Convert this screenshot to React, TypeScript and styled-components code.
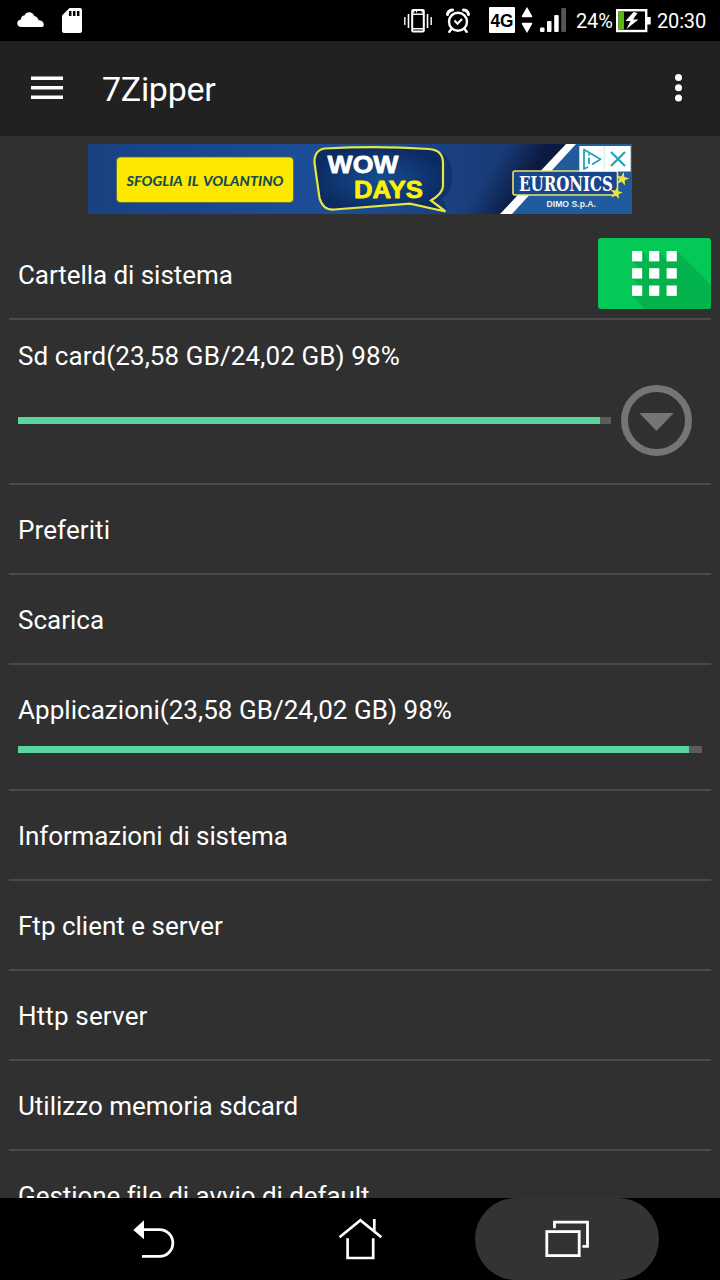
import React from "react";
import styled, { createGlobalStyle } from "styled-components";

const GlobalStyle = createGlobalStyle`
  * { box-sizing: border-box; }
  body { margin: 0; background: #000; }
  svg { display: block; flex: none; }
`;

const Screen = styled.div`
  width: 720px;
  height: 1280px;
  display: flex;
  flex-direction: column;
  overflow: hidden;
  background: #303030;
  color: #fff;
  font-family: Roboto, "Liberation Sans", sans-serif;
`;

const StatusBar = styled.header`
  flex: none;
  height: 41px;
  padding: 0 14px 0 16px;
  display: flex;
  justify-content: space-between;
  align-items: center;
  background: #000;
`;

const StatusGroup = styled.div<{ $gap?: number }>`
  display: flex;
  align-items: center;
  height: 41px;
  gap: ${(p) => p.$gap ?? 0}px;
`;

const StatusText = styled.span<{ $width: number; $ml?: number }>`
  width: ${(p) => p.$width}px;
  margin-left: ${(p) => p.$ml ?? 0}px;
  padding-top: 1px;
  font-size: 20px;
  letter-spacing: -0.15px;
  line-height: 41px;
  white-space: nowrap;
`;

const Toolbar = styled.div`
  flex: none;
  height: 95px;
  padding: 0 37px 0 31px;
  display: flex;
  align-items: center;
  background: #212121;
`;

const Title = styled.h1`
  flex: 1;
  margin: 1px 0 0 39px;
  font-size: 34px;
  font-weight: 400;
  letter-spacing: -0.3px;
  line-height: 39px;
`;

const Body = styled.main`
  flex: 1;
  min-height: 0;
  overflow: hidden;
`;

const AdSlot = styled.div`
  height: 94px;
  padding-top: 8px;
  display: flex;
  justify-content: center;
  align-items: flex-start;
`;

const List = styled.ul`
  margin: 0;
  padding: 0 9px;
  list-style: none;
`;

const Row = styled.li<{ $height?: number }>`
  height: ${(p) => p.$height ?? 90}px;
  padding-left: 9px;
  border-bottom: 2px solid #4a4a4a;
  display: flex;
  flex-direction: column;
`;

const RowLine = styled.div`
  display: flex;
  justify-content: space-between;
  align-items: center;
`;

const Label = styled.span<{ $height?: number; $lineHeight?: number; $spacing?: number }>`
  font-size: 26px;
  letter-spacing: ${(p) => p.$spacing ?? 0}px;
  line-height: ${(p) => p.$lineHeight ?? 90}px;
  height: ${(p) => p.$height ?? 90}px;
  white-space: nowrap;
`;

const Track = styled.div<{ $width: number }>`
  width: ${(p) => p.$width}px;
  height: 7px;
  background: #5c5c5c;
`;

const Fill = styled.div`
  height: 7px;
  background: #5ad69c;
`;

const StorageLine = styled.div`
  display: flex;
  align-items: center;
  gap: 10px;
`;

const AppStorage = styled.div`
  margin-top: -9px;
`;

const GridButton = styled.button`
  width: 113px;
  height: 71px;
  margin-top: -3px;
  padding: 0;
  border: 0;
  border-radius: 3px;
  overflow: hidden;
  background: #05c957;
`;

const ExpandButton = styled.button`
  padding: 0;
  border: 0;
  background: none;
`;

const NavBar = styled.nav`
  flex: none;
  height: 82px;
  padding-left: 61px;
  display: flex;
  gap: 23px;
  background: #000;
`;

const NavButton = styled.button<{ $pressed?: boolean }>`
  width: 184px;
  height: 82px;
  padding: 0;
  border: 0;
  border-radius: 41px;
  display: flex;
  align-items: center;
  justify-content: center;
  background: ${(p) => (p.$pressed ? "#333" : "transparent")};
`;

const CloudIcon = () => (
  <svg width="30" height="41" viewBox="0 0 30 41" fill="#fff">
    <path d="M5.500 27C.2 27 -.2 19.800 5 19.500C5 16.500 6.500 15.300 8.500 15.500C10 11.200 16.500 11 18.300 16C20.500 16.300 22.300 18 22.500 20.300C25.500 20 28 22.500 27.800 25C27.600 26.300 27 27 26 27Z" />
  </svg>
);

const SdIcon = () => (
  <svg width="20" height="41" viewBox="0 0 20 41">
    <path d="M7.500 8H18Q20 8 20 10V31Q20 33 18 33H2Q0 33 0 31V15.500Z" fill="#fff" />
    <path d="M8.200 11v5M12.200 11v5M16.200 11v5" stroke="#000" strokeWidth="2.500" />
  </svg>
);

const VibrateIcon = () => (
  <svg width="28" height="41" viewBox="0 0 28 41" fill="none" stroke="#fff">
    <path d="M.8 17v8M27.200 17v8" strokeWidth="1.400" />
    <path d="M4.500 14v14M23.500 14v14" strokeWidth="1.600" />
    <rect x="8.200" y="10" width="11.600" height="21.600" rx="1" strokeWidth="2" />
    <path d="M8 14.200h12M8 28.700h12" strokeWidth="1.500" />
    <path d="M8 11.800h2.500M12 11.800h1M17.500 11.800h2.500" strokeWidth="1.600" />
  </svg>
);

const AlarmIcon = () => (
  <svg width="24" height="41" viewBox="0 0 24 41" fill="none" stroke="#fff" strokeLinecap="round">
    <circle cx="12" cy="21.800" r="9" strokeWidth="2.400" />
    <path d="M1.500 14.500Q2 10.500 6.500 10M22.500 14.500Q22 10.500 17.500 10" strokeWidth="3" />
    <path d="M5.500 29L3.300 31.800M18.500 29L20.700 31.800" strokeWidth="2.400" />
    <path d="M8.500 20.500L11.500 23.700L16 19" strokeWidth="2.200" strokeLinecap="butt" />
  </svg>
);

const NetworkIcon = () => (
  <svg width="26" height="41" viewBox="0 0 26 41">
    <rect y="7" width="26" height="26" rx="1" fill="#fff" />
    <text x="1.500" y="27" fontSize="19" fontWeight="700" textLength="23" lengthAdjust="spacingAndGlyphs" fontFamily='"Liberation Sans", sans-serif'>
      4G
    </text>
  </svg>
);

const DataIcon = () => (
  <svg width="12" height="41" viewBox="0 0 12 41" fill="#fff">
    <path d="M6 7L11.300 16.300Q11.300 17.300 10.300 17.300H1.700Q.7 17.300 .7 16.300ZM6 33L11.300 23.700Q11.300 22.700 10.300 22.700H1.700Q.7 22.700 .7 23.700Z" />
  </svg>
);

const SignalIcon = () => (
  <svg width="26" height="41" viewBox="0 0 26 41" fill="#fff">
    <rect y="27.500" width="4.500" height="4.500" rx="1" />
    <rect x="7" y="21" width="4.500" height="11" rx="1" />
    <rect x="14.200" y="15" width="4.500" height="17" rx="1" />
    <rect x="21.200" y="8" width="4.800" height="24" rx="1" fill="#555" />
  </svg>
);

const BatteryIcon = () => (
  <svg width="35" height="41" viewBox="0 0 35 41">
    <rect x="1.200" y="10.200" width="29" height="20.800" fill="#000" stroke="#fff" strokeWidth="2.400" />
    <rect x="2.400" y="11.400" width="5.600" height="18.400" fill="#5cb410" />
    <rect x="31" y="17" width="3.700" height="7.500" fill="#fff" />
    <path d="M17.500 12L9.500 21H14.500L10.500 29L22.500 19.500H17L21.500 13Z" fill="#fff" />
  </svg>
);

const MenuIcon = () => (
  <svg width="32" height="32" viewBox="0 0 32 32" stroke="#fff" strokeWidth="3.600">
    <path d="M0 5.300H32M0 14.700H32M0 24.200H32" />
  </svg>
);

const MoreIcon = () => (
  <svg width="9" height="32" viewBox="0 0 9 32" fill="#fff">
    <circle cx="4.500" cy="4.600" r="3.500" />
    <circle cx="4.500" cy="14.700" r="3.500" />
    <circle cx="4.500" cy="24.900" r="3.500" />
  </svg>
);

const GridIcon = () => (
  <svg width="113" height="71" viewBox="0 0 113 71">
    <path d="M34 58L47 71H113V47L79 13L69 23L61 13L51 23L44 13L34 23L41 30L34 40L41 47Z" fill="#04b34c" />
    {[13, 30.200, 47.500].map((y) =>
      [34, 51.100, 68.600].map((x) => <rect key={`${x}-${y}`} x={x} y={y} width="10.200" height="10.400" fill="#fff" />)
    )}
  </svg>
);

const ExpandIcon = () => (
  <svg width="71" height="71" viewBox="0 0 71 71">
    <circle cx="35.500" cy="35.500" r="32" fill="none" stroke="#757575" strokeWidth="7" />
    <path d="M18.300 28H52.700L35.500 46Z" fill="#757575" />
  </svg>
);

const BackIcon = () => (
  <svg width="44" height="44" viewBox="0 0 44 44">
    <path d="M11 12.600H28.500A13.200 13.200 0 0 1 28.500 39.300H11" fill="none" stroke="#fff" strokeWidth="2.800" />
    <path d="M2.300 13L13 3.300V22.300Z" fill="#fff" />
  </svg>
);

const HomeIcon = () => (
  <svg width="44" height="44" viewBox="0 0 44 44" fill="none" stroke="#fff" strokeWidth="2.700">
    <path d="M1.500 20.300L22.400 3.300L43.400 20.300M36.300 2V14.500M9.600 21.300V41H35.200V21.300" />
  </svg>
);

const RecentsIcon = () => (
  <svg width="44" height="44" viewBox="0 0 44 44" fill="none" stroke="#fff" strokeWidth="2.800">
    <rect x="1.800" y="14.600" width="32.400" height="24" />
    <path d="M9.500 11.300V5.200H42.500V29.300H37.500" />
  </svg>
);

const star = (cx: number, cy: number, r: number) =>
  Array.from({ length: 10 }, (_, i) => {
    const a = -Math.PI / 2 + 0.2 + (i * Math.PI) / 5;
    const d = i % 2 ? r * 0.4 : r;
    return `${(cx + d * Math.cos(a)).toFixed(1)},${(cy + d * Math.sin(a)).toFixed(1)}`;
  }).join(" ");

const AdBanner = () => (
  <svg width="544" height="70" viewBox="0 0 544 70">
    <defs>
      <linearGradient id="base" x1="0" x2="1" y1="0" y2="0">
        <stop offset="0" stopColor="#1a4180" />
        <stop offset=".12" stopColor="#18458c" />
        <stop offset=".45" stopColor="#1c4e98" />
        <stop offset=".72" stopColor="#193d7b" />
        <stop offset="1" stopColor="#163467" />
      </linearGradient>
      <linearGradient id="shade" x1="405" y1="20" x2="452" y2="48" gradientUnits="userSpaceOnUse">
        <stop offset="0" stopColor="#0c1f4b" stopOpacity="0" />
        <stop offset=".7" stopColor="#0b1a40" />
      </linearGradient>
      <radialGradient id="bubble">
        <stop offset="0" stopColor="#164e91" />
        <stop offset="1" stopColor="#0c2b63" />
      </radialGradient>
    </defs>
    <rect width="544" height="70" fill="url(#base)" />
    <rect x="28.500" y="13" width="177" height="45.500" rx="4" fill="#ffe800" stroke="#4a6a50" strokeWidth=".8" />
    <text x="38.500" y="42" fontFamily='Lato, "Liberation Sans", sans-serif' fontSize="13.500" fontWeight="900" fontStyle="italic" wordSpacing="2" fill="#14504f" textLength="157" lengthAdjust="spacingAndGlyphs">
      SFOGLIA IL VOLANTINO
    </text>
    <path d="M352 8Q365 12 364 35Q363 50 354 54L360 67L346 58Z" fill="#12336c" />
    <path
      d="M237 4.500Q290 1.500 341 5Q355 6 355 19V42Q355 49 343 56.500L357.500 67.500L322 59.700L246 65.500Q235 66.500 231.500 54L226.500 19Q226 6 237 4.500Z"
      fill="url(#bubble)" stroke="#e7e63e" strokeWidth="2.200"
    />
    <g fontFamily='"Liberation Sans", sans-serif' fontWeight="700" fontSize="24.500" strokeWidth=".8" strokeLinejoin="round">
      <text x="239.500" y="28.500" fill="#fff" stroke="#fff" textLength="71" lengthAdjust="spacingAndGlyphs">WOW</text>
      <text x="266" y="53.500" fill="#fff200" stroke="#fff200" textLength="69" lengthAdjust="spacingAndGlyphs">DAYS</text>
    </g>
    <path d="M400 0H482L418 70H375Z" fill="url(#shade)" />
    <path d="M487 0H544V70H423Z" fill="#205b9d" />
    <path d="M478 0H488L424 70H412Z" fill="#fff" />
    <rect x="425" y="27" width="104.500" height="24" rx="2" fill="#17468c" stroke="#e9e468" strokeWidth="1.600" />
    <text x="431" y="46.500" fontFamily='"DejaVu Serif", "Liberation Serif", serif' fontWeight="700" fontSize="20.500" fill="#fff" textLength="94" lengthAdjust="spacingAndGlyphs">
      EURONICS
    </text>
    <text x="458.500" y="63" fontFamily='"Liberation Sans", sans-serif' fontWeight="700" fontSize="9" fill="#e8f0f8" textLength="49.500" lengthAdjust="spacingAndGlyphs">
      DIMO S.p.A.
    </text>
    <rect x="491.300" y="2" width="51.400" height="25.500" fill="#fff" />
    <path d="M516.300 2V27.500" stroke="#d5e5e9" strokeWidth="1" />
    <g fill="none" stroke="#1fa5b8" strokeWidth="1.800" strokeLinejoin="round">
      <path d="M500 23L496 25V5.500L512.500 15.200L504 20.500" />
      <path d="M501 13.500V20M501 9.700V11.500" />
      <path d="M523 8L537 22M537 8L523 22" strokeWidth="2.200" />
    </g>
    <polygon points={star(534.3, 35, 7)} fill="#eee23c" />
    <polygon points={star(528.3, 49, 6.5)} fill="#eee23c" />
  </svg>
);

const Progress = ({ width, value }: { width: number; value: number }) => (
  <Track $width={width}>
    <Fill style={{ width: `${value}%` }} />
  </Track>
);

const entries = [
  { name: "Informazioni di sistema", spacing: -0.1 },
  { name: "Ftp client e server", spacing: 0 },
  { name: "Http server", spacing: 0.15 },
  { name: "Utilizzo memoria sdcard", spacing: 0 },
  { name: "Gestione file di avvio di default", spacing: -0.06 },
];

const RightStatus = styled(StatusGroup)`
  & > svg:nth-of-type(2) { margin-left: 14px; }
  & > svg:nth-of-type(3) { margin-left: 19px; }
  & > svg:nth-of-type(4) { margin-left: 6px; }
  & > svg:nth-of-type(5) { margin-left: 7px; }
`;

export default function App() {
  return (
    <Screen>
      <GlobalStyle />
      <StatusBar>
        <StatusGroup $gap={16}>
          <CloudIcon />
          <SdIcon />
        </StatusGroup>
        <RightStatus>
          <VibrateIcon />
          <AlarmIcon />
          <NetworkIcon />
          <DataIcon />
          <SignalIcon />
          <StatusText $width={40} $ml={10}>24%</StatusText>
          <BatteryIcon />
          <StatusText $width={49} $ml={6}>20:30</StatusText>
        </RightStatus>
      </StatusBar>
      <Toolbar>
        <MenuIcon />
        <Title>7Zipper</Title>
        <MoreIcon />
      </Toolbar>
      <Body>
        <AdSlot>
          <AdBanner />
        </AdSlot>
        <List>
          <Row>
            <RowLine>
              <Label $spacing={-0.06}>Cartella di sistema</Label>
              <GridButton aria-label="Apps">
                <GridIcon />
              </GridButton>
            </RowLine>
          </Row>
          <Row $height={165}>
            <Label $height={65} $lineHeight={73} $spacing={0.1}>Sd card(23,58 GB/24,02 GB) 98%</Label>
            <StorageLine>
              <Progress width={593} value={98.2} />
              <ExpandButton aria-label="Expand">
                <ExpandIcon />
              </ExpandButton>
            </StorageLine>
          </Row>
          <Row>
            <Label $spacing={0.1}>Preferiti</Label>
          </Row>
          <Row>
            <Label>Scarica</Label>
          </Row>
          <Row $height={126}>
            <Label $spacing={0.04}>Applicazioni(23,58 GB/24,02 GB) 98%</Label>
            <AppStorage>
              <Progress width={684} value={98.1} />
            </AppStorage>
          </Row>
          {entries.map(({ name, spacing }) => (
            <Row key={name}>
              <Label $spacing={spacing}>{name}</Label>
            </Row>
          ))}
        </List>
      </Body>
      <NavBar>
        <NavButton aria-label="Back">
          <BackIcon />
        </NavButton>
        <NavButton aria-label="Home">
          <HomeIcon />
        </NavButton>
        <NavButton aria-label="Recent apps" $pressed>
          <RecentsIcon />
        </NavButton>
      </NavBar>
    </Screen>
  );
}
